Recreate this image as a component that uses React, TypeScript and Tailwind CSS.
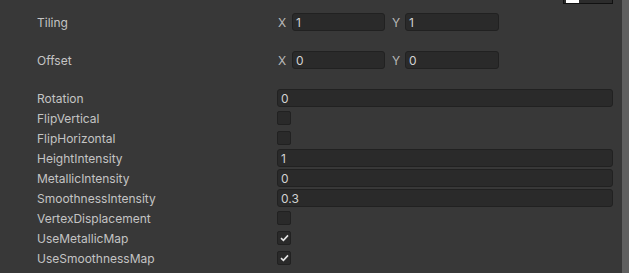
import React from 'react'

const font = { fontFamily: 'Inter, "Noto Sans", sans-serif' }

function Field({ value, className = '' }: { value: string; className?: string }) {
  return (
    <div
      className={`h-[18px] rounded-[3px] border border-[#212121] bg-[#2a2a2a] pl-[3px] pt-[1px] text-[12px] leading-[16px] text-[#d2d2d2] ${className}`}
    >
      {value}
    </div>
  )
}

function Check({ on }: { on?: boolean }) {
  return (
    <div className="flex h-[14px] w-[14px] items-center justify-center rounded-[2px] border border-[#212121] bg-[#2a2a2a]">
      {on && (
        <svg width="9" height="8" viewBox="0 0 9 8">
          <path d="M1 4.2 L3.4 6.4 L8 1.4" fill="none" stroke="#e4e4e4" strokeWidth="1.6" />
        </svg>
      )}
    </div>
  )
}

function Row({ label, children }: { label: string; children: React.ReactNode }) {
  return (
    <div className="flex h-[18px] items-center">
      <div className="w-[240px] pt-[2px] text-[12px] text-[#c4c4c4]">{label}</div>
      <div className="flex flex-1 items-center">{children}</div>
    </div>
  )
}

function Vec({ label, x, y }: { label: string; x: string; y: string }) {
  return (
    <Row label={label}>
      <span className="w-[15px] pl-[1px] pt-[2px] text-[12px] text-[#b8b8b8]">X</span>
      <Field value={x} className="w-[93px]" />
      <span className="ml-[7px] w-[13px] pt-[2px] text-[12px] text-[#b8b8b8]">Y</span>
      <Field value={y} className="w-[94px]" />
    </Row>
  )
}

export default function App() {
  return (
    <div className="relative flex h-[273px] w-[629px] overflow-hidden bg-[#383838]" style={font}>
      <div className="absolute left-[563px] top-[-11px] flex h-[15px] w-[50px] items-center gap-[1px] border border-[#111] bg-[#2c2c2c] pl-[2px] text-[11px] leading-[13px] text-[#c8c8c8]">
        <div className="h-[12px] w-[16px] bg-white" />
        Select
      </div>
      <div className="flex flex-1 flex-col pl-[37px] pr-[9px] pt-[13px]">
        <Vec label="Tiling" x="1" y="1" />
        <div className="mt-[20px]">
          <Vec label="Offset" x="0" y="0" />
        </div>
        <div className="mt-[20px] flex flex-col gap-[2px]">
          <Row label="Rotation"><Field value="0" className="flex-1" /></Row>
          <Row label="FlipVertical"><Check /></Row>
          <Row label="FlipHorizontal"><Check /></Row>
          <Row label="HeightIntensity"><Field value="1" className="flex-1" /></Row>
          <Row label="MetallicIntensity"><Field value="0" className="flex-1" /></Row>
          <Row label="SmoothnessIntensity"><Field value="0.3" className="flex-1" /></Row>
          <Row label="VertexDisplacement"><Check /></Row>
          <Row label="UseMetallicMap"><Check on /></Row>
          <Row label="UseSmoothnessMap"><Check on /></Row>
        </div>
      </div>
      <div className="w-[7px] bg-[#5f5f5f]" />
    </div>
  )
}
